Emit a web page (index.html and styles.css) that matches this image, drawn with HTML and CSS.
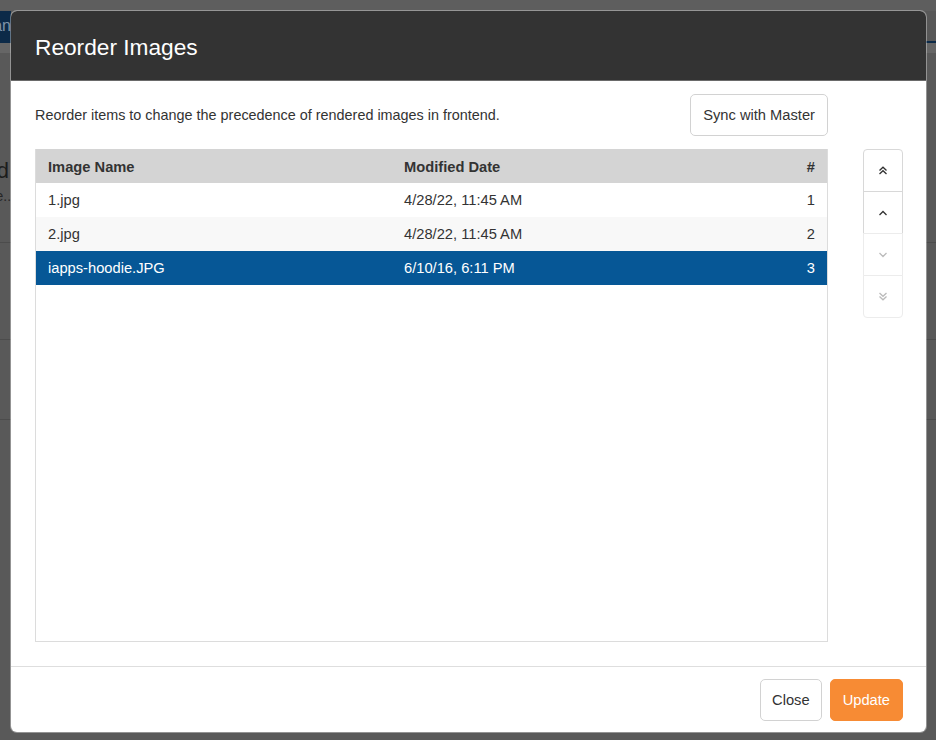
FILE: index.html
```html
<!DOCTYPE html>
<html>
<head>
<meta charset="utf-8">
<link rel="stylesheet" href="styles.css">
</head>
<body>
<div class="page">
  <div class="topstrip"></div>
  <div class="nav"><div class="navtab"><span>Manage Plans</span></div></div>
  <div class="subbar"></div>
  <div class="prow p1">
    <div class="clip">
      <div class="clip-inner">
        <div class="ptitle">Unassigned</div>
        <div class="psub">No image assigned to this product type...</div>
      </div>
    </div>
  </div>
  <div class="prow p2"></div>
  <div class="prow p3"></div>
</div>

<div class="modal">
  <div class="modal-header">
    <h1 class="modal-title">Reorder Images</h1>
  </div>
  <div class="modal-body">
    <div class="main-col">
      <div class="toprow">
        <p class="desc">Reorder items to change the precedence of rendered images in frontend.</p>
        <button class="btn">Sync with Master</button>
      </div>
      <div class="table-box">
        <table class="grid">
          <thead>
            <tr><th class="c-name">Image Name</th><th class="c-date">Modified Date</th><th class="c-num">#</th></tr>
          </thead>
          <tbody>
            <tr><td>1.jpg</td><td>4/28/22, 11:45 AM</td><td class="c-num">1</td></tr>
            <tr class="alt"><td>2.jpg</td><td>4/28/22, 11:45 AM</td><td class="c-num">2</td></tr>
            <tr class="sel"><td>iapps-hoodie.JPG</td><td>6/10/16, 6:11 PM</td><td class="c-num">3</td></tr>
          </tbody>
        </table>
      </div>
    </div>
    <div class="arrows">
      <button class="arr first"><svg width="10" height="9" viewBox="0 0 10 9"><path d="M1.5 4.5 L5 1.2 L8.5 4.5 M1.5 8 L5 4.7 L8.5 8" fill="none" stroke="#333" stroke-width="1.3"/></svg></button>
      <button class="arr"><svg width="10" height="6" viewBox="0 0 10 6"><path d="M1.5 5 L5 1.5 L8.5 5" fill="none" stroke="#333" stroke-width="1.3"/></svg></button>
      <button class="arr dis"><svg width="10" height="6" viewBox="0 0 10 6"><path d="M1.5 1 L5 4.5 L8.5 1" fill="none" stroke="#bbb" stroke-width="1.3"/></svg></button>
      <button class="arr dis last"><svg width="10" height="9" viewBox="0 0 10 9"><path d="M1.5 1 L5 4.3 L8.5 1 M1.5 4.5 L5 7.8 L8.5 4.5" fill="none" stroke="#bbb" stroke-width="1.3"/></svg></button>
    </div>
  </div>
  <div class="modal-footer">
    <button class="btn">Close</button>
    <button class="btn primary">Update</button>
  </div>
</div>
</body>
</html>
```

FILE: styles.css
```css
* { box-sizing: border-box; }
html, body { margin: 0; padding: 0; }
body {
  width: 936px;
  height: 740px;
  overflow: hidden;
  background: #595959;
  font-family: "Liberation Sans", Arial, Helvetica, sans-serif;
  color: #333;
}
.page { width: 936px; height: 740px; }
.topstrip { height: 11px; background: #5e5e5e; }
.nav {
  height: 32px;
  background: #585858;
  border-bottom: 2px solid #0c2a48;
  display: flex;
}
.navtab {
  width: 11px;
  background: #0c2a48;
  display: flex;
  justify-content: flex-end;
  align-items: center;
  overflow: hidden;
}
.navtab span { flex: none; color: #7f93a8; font-size: 16px; white-space: nowrap; margin-right: -8px; }
.subbar { height: 10px; background: #666; }
.prow { border-bottom: 1px solid #4c4c4c; }
.p1 { height: 190px; display: flex; align-items: flex-start; }
.p2 { height: 97px; }
.p3 { height: 80px; }
.clip {
  width: 11px;
  overflow: hidden;
  margin-top: 105px;
  display: flex;
  justify-content: flex-end;
}
.clip-inner { flex: none; white-space: nowrap; }
.ptitle { font-size: 22px; color: #1c1c1c; line-height: 26px; text-align: right; margin-right: 2px; }
.psub { font-size: 14px; color: #262626; line-height: 18px; margin-top: 3px; text-align: right; margin-right: -4px; }

.modal {
  position: absolute;
  left: 11px;
  top: 11px;
  width: 915px;
  height: 721px;
  background: #fff;
  border-radius: 6px;
  overflow: hidden;
  display: flex;
  flex-direction: column;
  box-shadow: 0 0 0 1px rgba(255,255,255,0.35);
}
.modal-header {
  height: 70px;
  flex: none;
  background: #333;
  border-bottom: 1px solid #6a6a6a;
  display: flex;
  align-items: center;
  padding-left: 24px;
}
.modal-title {
  margin: 0;
  font-weight: normal;
  font-size: 22.7px;
  color: #fff;
  line-height: 1;
  padding-top: 3px;
}
.modal-body {
  flex: none;
  height: 585px;
  padding: 13px 23px 24px 24px;
  display: flex;
  gap: 35px;
}
.main-col { width: 793px; display: flex; flex-direction: column; gap: 13px; }
.toprow { height: 42px; display: flex; align-items: center; justify-content: space-between; }
.desc { margin: 0; font-size: 14.4px; color: #333; padding-bottom: 1px; }
.btn {
  height: 42px;
  padding: 0 12px;
  background: #fff;
  border: 1px solid #d2d2d2;
  border-radius: 5px;
  font-family: inherit;
  font-size: 14.7px;
  color: #333;
}
.btn.primary { background: #f78b34; border-color: #f78b34; color: #fff; }
.table-box { height: 493px; border: 1px solid #dcdcdc; border-top: none; }
.grid { width: 100%; border-collapse: collapse; font-size: 14.7px; }
.grid th, .grid td { height: 34px; padding: 0 12px; text-align: left; }
.grid th { background: #d4d4d4; font-weight: bold; color: #333; padding-top: 1px; }
.grid td { color: #333; }
.grid .c-name { width: 356px; }
.grid .c-num { text-align: right; width: 40px; }
.grid tr.alt td { background: #f8f8f8; }
.grid tr.sel td { background: #065796; color: #fff; }
.arrows { width: 40px; margin-top: 55px; display: flex; flex-direction: column; }
.arr {
  height: 43px;
  width: 40px;
  padding: 0;
  background: #fff;
  border: 1px solid #d8d8d8;
  display: flex;
  align-items: center;
  justify-content: center;
  margin-top: -1px;
}
.arr.first { margin-top: 0; border-radius: 4px 4px 0 0; }
.arr.last { border-radius: 0 0 4px 4px; }
.arr.dis { border-color: #ececec; }
.arr svg { display: block; }
.modal-footer {
  flex: 1;
  border-top: 1px solid #dedede;
  padding: 12px 23px 0 0;
  display: flex;
  justify-content: flex-end;
  align-items: flex-start;
  gap: 8px;
}
.modal-footer .btn:first-child { padding: 0 11px; }
```
